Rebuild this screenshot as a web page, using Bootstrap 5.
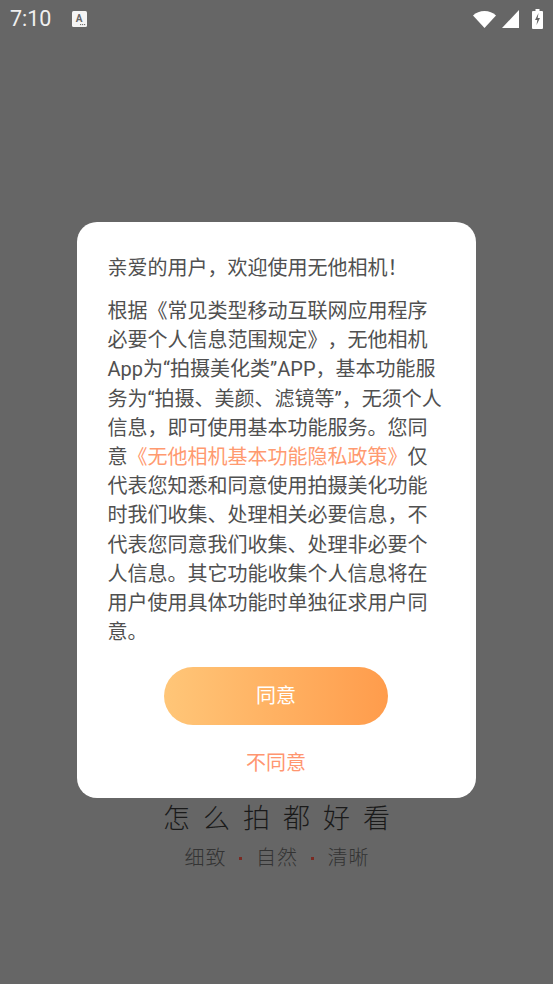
<!DOCTYPE html>
<html lang="zh-CN">
<head>
<meta charset="utf-8">
<meta name="viewport" content="width=device-width, initial-scale=1">
<link href="https://cdn.jsdelivr.net/npm/bootstrap@5.3.0/dist/css/bootstrap.min.css" rel="stylesheet">
<style>
html,body{height:100%;margin:0}
body{background:#666;font-family:Roboto,"Noto Sans CJK SC",sans-serif;overflow:hidden;text-spacing-trim:space-all;font-variant-east-asian:normal}
.screen{height:984px;width:553px;position:relative;background:#666}
.statusbar{height:38px;padding:0 10px;color:#f0f0f0}
.clock{font-size:21.5px;line-height:38px;width:62px}
.under{position:absolute;left:0;right:0;top:800px}
.slogan{font-size:27px;line-height:38px;letter-spacing:13px;margin-right:-13px;color:#1a1a1a;font-weight:300;margin-bottom:0}
.tagline{margin-top:5px;font-size:20px;line-height:30px;color:#333;gap:13.75px;font-weight:300;letter-spacing:1px}
.tagline span{margin-right:-1px}
.reddot{width:3px;height:3px;background:#7a2a22}
.dialog{position:absolute;left:77px;top:222px;width:399px;height:576px;border-radius:20px;background:#fff;padding:31px 20px 0 30.5px;border:0}
.hello,.policy{font-size:20px;color:#505050;margin:0;white-space:nowrap}
.hello{line-height:30px}
.policy{line-height:29.2px;margin-top:14px}
.policy span{color:#ff9a70}
.agree{width:224px;height:58px;margin:20px auto 0 56.500px;background:linear-gradient(90deg,#ffc678,#ff9c4c);color:#fff;font-size:20px;border:0;line-height:58px;padding:0;display:block}
.refuse{width:224px;margin:23px 0 0 56.500px;color:#ff9670;font-size:20px;line-height:30px;padding:0;border:0;display:block;background:none}
</style>
</head>
<body>
<div class="screen">
  <div class="statusbar d-flex align-items-center">
    <div class="clock">7:10</div>
    <svg width="15" height="16" viewBox="0 0 15 16"><rect width="15" height="16" rx="1.5" fill="#f4f4f4"/><text x="7.2" y="11" font-size="10" font-weight="700" text-anchor="middle" font-family="Roboto,sans-serif" fill="#666">A</text><path d="M8 13.6h1.2M10 13.6h1.2M12 13.6h1.2" stroke="#666" stroke-width="1"/></svg>
    <div class="ms-auto d-flex align-items-center">
      <svg width="23" height="19" viewBox="0 0 23 19"><path d="M0 5.500C3 2.500 7 1 11.500 1S20 2.500 23 5.500L11.500 18Z" fill="#fff"/></svg>
      <svg width="17" height="18" viewBox="0 0 17 18" style="margin-left:6px"><path d="M17 0V18H0Z" fill="#fff"/></svg>
      <svg width="11" height="20" viewBox="0 0 11 20" style="margin-left:13px"><path d="M3.500 0h4v2H10a1 1 0 0 1 1 1v16a1 1 0 0 1-1 1H1a1 1 0 0 1-1-1V3a1 1 0 0 1 1-1h2.500Z" fill="#fff"/><path d="M6.500 4 3 11h2.300L4.500 16 8 9H5.700Z" fill="#666"/></svg>
    </div>
  </div>

  <div class="under text-center">
    <p class="slogan">怎么拍都好看</p>
    <div class="tagline d-flex justify-content-center align-items-center">
      <span>细致</span><i class="reddot"></i><span>自然</span><i class="reddot"></i><span>清晰</span>
    </div>
  </div>

  <div class="card dialog">
    <p class="hello">亲爱的用户，欢迎使用无他相机！</p>
    <p class="policy">根据《常见类型移动互联网应用程序<br>必要个人信息范围规定》，无他相机<br>App为“拍摄美化类”APP，基本功能服<br>务为“拍摄、美颜、滤镜等”，无须个人<br>信息，即可使用基本功能服务。您同<br>意<span>《无他相机基本功能隐私政策》</span>仅<br>代表您知悉和同意使用拍摄美化功能<br>时我们收集、处理相关必要信息，不<br>代表您同意我们收集、处理非必要个<br>人信息。其它功能收集个人信息将在<br>用户使用具体功能时单独征求用户同<br>意。</p>
    <button type="button" class="btn rounded-pill agree">同意</button>
    <button type="button" class="btn refuse">不同意</button>
  </div>
</div>
<script src="https://cdn.jsdelivr.net/npm/bootstrap@5.3.0/dist/js/bootstrap.bundle.min.js"></script>
</body>
</html>
